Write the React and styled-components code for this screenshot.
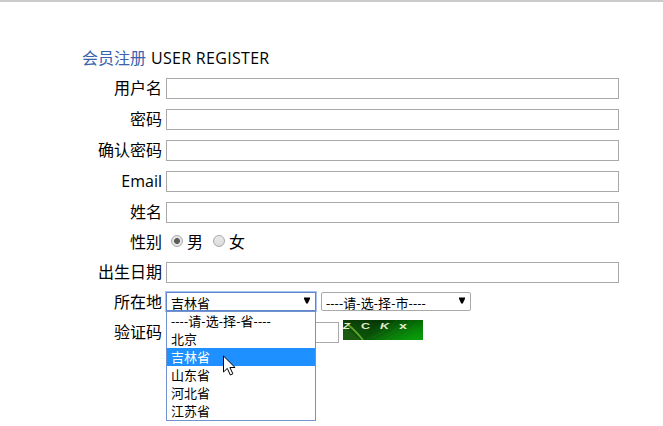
import React from "react";
import styled, { createGlobalStyle } from "styled-components";

const Global = createGlobalStyle`
  * { box-sizing: border-box; }
  body {
    margin: 0;
    background: #fff;
    color: #000;
    font-family: "Open Sans", "Noto Sans CJK SC", sans-serif;
    font-size: 16px;
  }
`;

const Page = styled.main`
  width: 663px;
  height: 426px;
  overflow: hidden;
  border-top: 2px solid #ccc;
  padding: 41px 0 0 82px;
`;

const Title = styled.h1`
  margin: 0;
  height: 30px;
  display: flex;
  align-items: center;
  gap: 5px;
  font-size: 16px;
  line-height: 30px;
  font-weight: 400;
`;

const TitleAccent = styled.span`
  color: #3764ad;
`;

const TitleText = styled.span`
  letter-spacing: 0.3px;
`;

const Row = styled.div`
  display: grid;
  grid-template-columns: 80px 453px;
  column-gap: 4px;
  align-items: center;
  height: ${(p) => p.$height || 31}px;
`;

const Label = styled.label`
  text-align: right;
  line-height: 24px;
  padding-bottom: 1px;
  white-space: nowrap;
`;

const Field = styled.div`
  display: flex;
  align-items: center;
  position: relative;
`;

const Input = styled.input`
  width: ${(p) => p.$width || 453}px;
  height: 21px;
  margin: 0;
  padding: 1px 2px;
  border: 1px solid #a9a9a9;
  border-radius: 0;
  background: #fff;
  outline: none;
`;

const Radio = styled.span`
  width: 12px;
  height: 12px;
  margin: 0 4px 3px ${(p) => p.$left}px;
  border: 1px solid #a8a8a8;
  border-radius: 50%;
  background: ${(p) =>
    p.$checked
      ? "radial-gradient(circle, #5c5c5c 0 2.6px, #e6e6e6 3.3px)"
      : "linear-gradient(#e9e9e9, #dcdcdc)"};
`;

const RadioText = styled.span`
  line-height: 24px;
  padding-bottom: 1px;
`;

const SelectField = styled(Field)`
  align-items: flex-start;
  height: 21px;
`;

const Select = styled.div`
  width: 150px;
  height: 19px;
  margin-left: ${(p) => (p.$open ? 0 : 5)}px;
  padding: 1px 5px 0 4px;
  display: flex;
  justify-content: space-between;
  border: 1px solid ${(p) => (p.$open ? "#5f87cf" : "#a9a9a9")};
  border-radius: ${(p) => (p.$open ? 0 : 2)}px;
  box-shadow: ${(p) => (p.$open ? "0 0 0 1px #a9c4f2" : "none")};
  font-size: 13px;
  line-height: 18px;
  letter-spacing: ${(p) => (p.$open ? "0" : "0.12px")};
  white-space: nowrap;
`;

const Arrow = styled.svg`
  width: 6px;
  height: 7px;
  margin-top: 3px;
`;

const Menu = styled.ul`
  position: absolute;
  z-index: 2;
  top: 19px;
  left: 0;
  width: 150px;
  margin: 0;
  padding: 0;
  list-style: none;
  background: #fff;
  border: 1px solid #7292cf;
`;

const Option = styled.li`
  height: 18px;
  padding-left: 4px;
  font-size: 13px;
  line-height: 18px;
  letter-spacing: ${(p) => (p.$placeholder ? "0.12px" : "0")};
  color: ${(p) => (p.$active ? "#fff" : "#000")};
  background: ${(p) => (p.$active ? "#1e90ff" : "#fff")};
`;

const Cursor = styled.svg`
  position: absolute;
  z-index: 3;
  top: 63px;
  left: 57px;
  width: 13px;
  height: 22px;
`;

const Captcha = styled.svg`
  width: 80px;
  height: 20px;
  margin: 0 0 5px 4px;
`;

const provinces = ["----请-选-择-省----", "北京", "吉林省", "山东省", "河北省", "江苏省"];

function DownArrow() {
  return (
    <Arrow viewBox="0 0 6 7">
      <path d="M0 0.5h6v1.2L3.8 6.5H2.2L0 1.7z" fill="#000" />
    </Arrow>
  );
}

function TextRow({ label }) {
  return (
    <Row>
      <Label>{label}</Label>
      <Field><Input /></Field>
    </Row>
  );
}

function CaptchaImage() {
  return (
    <Captcha viewBox="0 0 80 20">
      <defs>
        <linearGradient id="leaf" x1="0" x2="1" y1="0" y2="0.2">
          <stop offset="0" stopColor="#16500b" />
          <stop offset="0.45" stopColor="#083f05" />
          <stop offset="0.72" stopColor="#087509" />
          <stop offset="1" stopColor="#06a006" />
        </linearGradient>
        <linearGradient id="shade" x1="0" x2="0" y1="0" y2="1">
          <stop offset="0" stopColor="#032803" stopOpacity="0.45" />
          <stop offset="1" stopColor="#129012" stopOpacity="0.25" />
        </linearGradient>
      </defs>
      <rect width="80" height="20" fill="url(#leaf)" />
      <rect width="80" height="20" fill="url(#shade)" />
      <path d="M0 6L18 20H0z" fill="#1b5b11" />
      <path d="M4 4Q12 10 20 20" stroke="#62a62c" strokeWidth="1.6" fill="none" />
      <path
        d="M24 19Q42 14 54 0M31 20Q50 15 62 0M40 20Q56 16 69 0M49 20Q63 16 76 0"
        stroke="#25a522"
        strokeWidth="0.7"
        strokeDasharray="1 1.2"
        opacity="0.6"
        fill="none"
      />
      <g fill="#e5edcf" fontFamily="Liberation Sans, sans-serif" fontSize="9" fontWeight="700">
        <text x="0" y="9" fontStyle="italic" textLength="7" lengthAdjust="spacingAndGlyphs">Z</text>
        <text x="18" y="9" textLength="9" lengthAdjust="spacingAndGlyphs">C</text>
        <text x="37" y="9" fontStyle="italic" textLength="9" lengthAdjust="spacingAndGlyphs">K</text>
        <text x="56" y="9" textLength="8" lengthAdjust="spacingAndGlyphs">x</text>
      </g>
    </Captcha>
  );
}

export default function App() {
  return (
    <>
      <Global />
      <Page>
        <Title>
          <TitleAccent>会员注册</TitleAccent>
          <TitleText>USER REGISTER</TitleText>
        </Title>
        <TextRow label="用户名" />
        <TextRow label="密码" />
        <TextRow label="确认密码" />
        <TextRow label="Email" />
        <TextRow label="姓名" />
        <Row $height={29}>
          <Label>性别</Label>
          <Field>
            <Radio $checked $left={5} />
            <RadioText>男</RadioText>
            <Radio $left={10} />
            <RadioText>女</RadioText>
          </Field>
        </Row>
        <TextRow label="出生日期" />
        <Row $height={29}>
          <Label>所在地</Label>
          <SelectField>
            <Select $open>
              吉林省
              <DownArrow />
            </Select>
            <Select>
              ----请-选-择-市----
              <DownArrow />
            </Select>
            <Menu>
              {provinces.map((name, i) => (
                <Option key={name} $placeholder={i === 0} $active={name === "吉林省"}>{name}</Option>
              ))}
            </Menu>
            <Cursor viewBox="0 0 13 22">
              <path
                d="M0.5 1v16l3.8-3.6 3 6.6 2.6-1.2-3-6.3h5.2z"
                fill="#fff"
                stroke="#000"
                strokeWidth="1"
              />
            </Cursor>
          </SelectField>
        </Row>
        <Row>
          <Label>验证码</Label>
          <Field>
            <Input $width={173} />
            <CaptchaImage />
          </Field>
        </Row>
      </Page>
    </>
  );
}
